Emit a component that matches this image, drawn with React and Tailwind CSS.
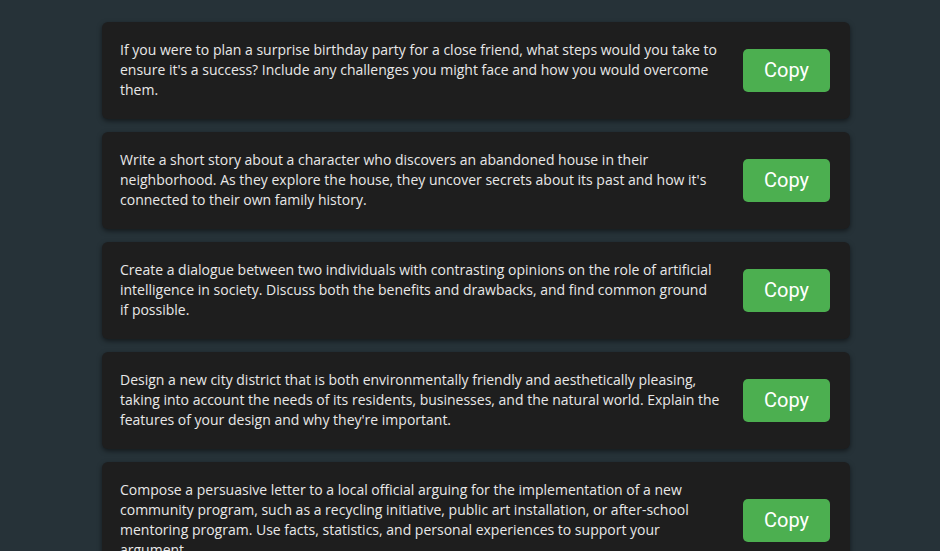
const prompts = [
  "If you were to plan a surprise birthday party for a close friend, what steps would you take to ensure it's a success? Include any challenges you might face and how you would overcome them.",
  "Write a short story about a character who discovers an abandoned house in their neighborhood. As they explore the house, they uncover secrets about its past and how it's connected to their own family history.",
  "Create a dialogue between two individuals with contrasting opinions on the role of artificial intelligence in society. Discuss both the benefits and drawbacks, and find common ground if\u00a0possible.",
  "Design a new city district that is both environmentally friendly and aesthetically pleasing, taking into account the needs of its residents, businesses, and the natural world. Explain the features of your design and why they're important.",
  "Compose a persuasive letter to a local official arguing for the implementation of a new community program, such as a recycling initiative, public art installation, or after-school mentoring program. Use facts, statistics, and personal experiences to support your argument.",
];

export default function App() {
  return (
    <div className="min-h-screen bg-[#263238] pl-[12px] pt-[22px] pb-5">
      <div className="mx-auto w-[748px] flex flex-col gap-[13px]">
        {prompts.map((text, i) => (
          <div
            key={i}
            className="flex items-center gap-[18px] bg-[#1e1e1e] rounded-md pl-[18px] pr-5 pt-[18px] pb-[19px] shadow-[0_2px_5px_rgba(0,0,0,0.5)]"
          >
            <p className="flex-1 text-[14px] leading-[20px] text-[#e8e8e8] font-['Open_Sans',sans-serif]">
              {text}
            </p>
            <button className="flex-shrink-0 bg-[#4caf50] text-white rounded-[5px] w-[87px] h-[43px] text-[20px] font-['Roboto',sans-serif]">
              Copy
            </button>
          </div>
        ))}
      </div>
    </div>
  );
}
